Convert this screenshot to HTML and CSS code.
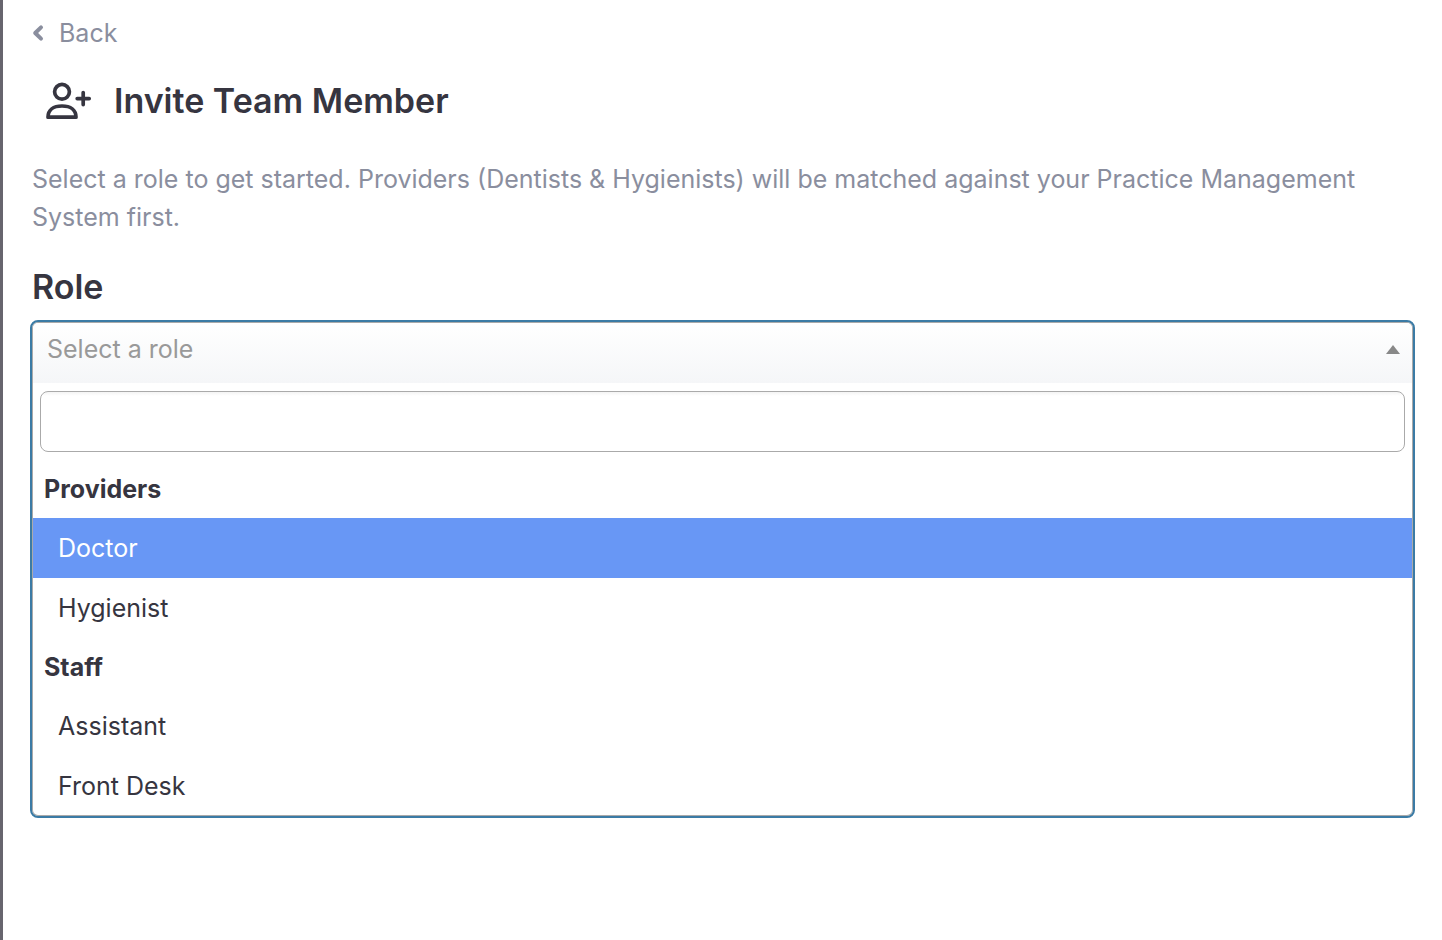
FILE: index.html
```
<!DOCTYPE html>
<html lang="en">
	<head>
		<meta charset="utf-8">
		<title>Invite Team Member</title>
		<link rel="stylesheet" href="styles.css">
	</head>
	<body>
		<main class="panel">
			<a class="back" href="#">
				<svg class="back-icon" width="12" height="18" viewBox="0 0 12 18" fill="none" stroke="currentColor" stroke-width="4" stroke-linecap="round" stroke-linejoin="round">
					<path d="M9 3.4L3.2 9L9 14.6"/>
				</svg>
				Back
			</a>

			<div class="page-title">
				<svg class="title-icon" width="46" height="38" viewBox="0 0 46 38" fill="none" stroke="currentColor" stroke-width="3.7" stroke-linecap="round" stroke-linejoin="round">
					<circle cx="16" cy="9.8" r="7.4"/>
					<path d="M2 35.2C2 28 7.4 24 16 24s14 4 14 11.2z"/>
					<path d="M31.2 16.6h12M37.2 10.6v12"/>
				</svg>
				<h1>Invite Team Member</h1>
			</div>

			<p class="intro">Select a role to get started. Providers (Dentists &amp; Hygienists) will be matched against your Practice Management System first.</p>

			<h2 class="role-label" id="role-label">Role</h2>
			<div class="chosen">
				<button type="button" class="chosen-single" aria-expanded="true" aria-labelledby="role-label" aria-controls="roles">
					<span>Select a role</span>
					<svg width="14" height="9" viewBox="0 0 14 9" fill="#888">
						<path d="M0 9L7 0l7 9z"/>
					</svg>
				</button>
				<div class="chosen-drop">
					<div class="chosen-search">
						<input type="text" aria-label="Search roles" autocomplete="off">
					</div>
					<ul class="chosen-results" id="roles" role="listbox" aria-labelledby="role-label">
						<li class="group" role="presentation">Providers</li>
						<li class="option highlighted" role="option" aria-selected="true">Doctor</li>
						<li class="option" role="option" aria-selected="false">Hygienist</li>
						<li class="group" role="presentation">Staff</li>
						<li class="option" role="option" aria-selected="false">Assistant</li>
						<li class="option" role="option" aria-selected="false">Front Desk</li>
					</ul>
				</div>
			</div>
		</main>
	</body>
</html>
```
FILE: styles.css
```
* {
	box-sizing: border-box;
}

body {
	margin: 0;
	background: #fff;
	color: #363540;
	font-family: Inter, "Liberation Sans", sans-serif;
	font-size: 25px;
	line-height: 38px;
}

.panel {
	min-height: 100vh;
	padding: 14px 27px 40px;
	border-left: 3px solid #67656e;
}

.back {
	display: inline-flex;
	align-items: center;
	gap: 15px;
	margin-left: 2px;
	color: #8a8e9e;
	text-decoration: none;
}

.page-title {
	display: flex;
	align-items: center;
	gap: 22px;
	margin-top: 24px;
	padding-left: 16px;
}

h1,
h2 {
	margin: 0;
	font-size: 34px;
	font-weight: 600;
	line-height: 50px;
}

.intro {
	margin: 34px 0 26px;
	padding-left: 2px;
	color: #8a8e9e;
}

.role-label {
	margin-bottom: 8px;
	padding-left: 2px;
}

/* role drop-down, open */
.chosen {
	overflow: hidden;
	padding: 1px 1px 0;
	border: 2px solid #3b7ba5;
	border-radius: 8px;
	box-shadow: inset 0 0 0 1px #aaa;
}

.chosen-single {
	display: flex;
	align-items: center;
	justify-content: space-between;
	width: 100%;
	height: 60px;
	padding: 0 12px 8px 14px;
	border: 0;
	border-radius: 5px 5px 0 0;
	background: linear-gradient(#fff, #f5f6f8);
	color: #999;
	font: inherit;
	text-align: left;
}

.chosen-search {
	padding: 8px 7px;
}

.chosen-search input {
	display: block;
	width: 100%;
	height: 61px;
	padding: 0 12px;
	border: 1px solid #aaa;
	border-radius: 8px;
	background: linear-gradient(#f4f4f4, #fff 4px);
	color: inherit;
	font: inherit;
	outline: 0;
}

.chosen-results {
	margin: 0;
	padding: 0;
	list-style: none;
}

.chosen-results li {
	padding: 10px 11px;
}

.chosen-results .group {
	font-weight: 700;
}

.chosen-results .option {
	padding: 11px 25px;
}

.chosen-results .highlighted {
	background: #6897f5;
	color: #fff;
}
```
